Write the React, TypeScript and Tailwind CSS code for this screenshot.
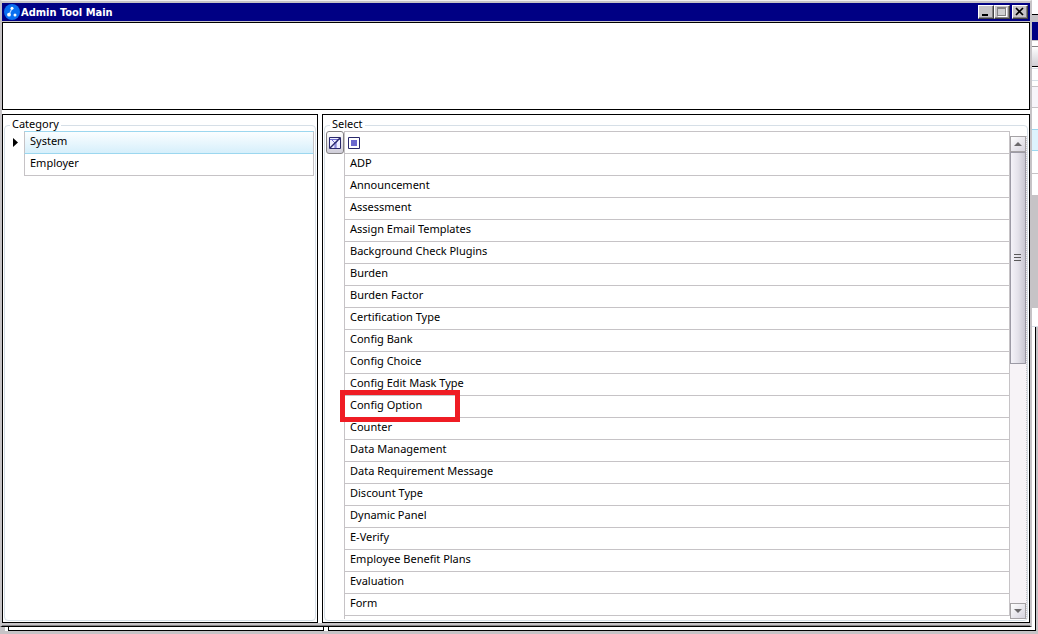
import { ReactNode } from "react";

const categories = ["System", "Employer"];

const options = [
	"ADP",
	"Announcement",
	"Assessment",
	"Assign Email Templates",
	"Background Check Plugins",
	"Burden",
	"Burden Factor",
	"Certification Type",
	"Config Bank",
	"Config Choice",
	"Config Edit Mask Type",
	"Config Option",
	"Counter",
	"Data Management",
	"Data Requirement Message",
	"Discount Type",
	"Dynamic Panel",
	"E-Verify",
	"Employee Benefit Plans",
	"Evaluation",
	"Form",
];

function AppLogo() {
	return (
		<svg width="16" height="16" viewBox="0 0 16 16">
			<circle cx="8" cy="8" r="8" fill="#0a6ff0" />
			<path d="M8 4.500 5 10.700" stroke="#b5d7ff" strokeWidth="1.200" />
			<circle cx="8" cy="4.300" r="1.500" fill="#fff" />
			<circle cx="5" cy="10.700" r="1.900" fill="#fff" />
			<circle cx="11" cy="10.900" r="1.500" fill="#fff" />
		</svg>
	);
}

function CaptionButton({ label, children }: { label: string; children: ReactNode }) {
	return (
		<button
			aria-label={label}
			className="h-[14px] w-4 bg-[#c6c3c6] border border-t-white border-l-white border-r-[#424142] border-b-[#424142] shadow-[inset_-1px_-1px_0_#848284]"
		>
			{children}
		</button>
	);
}

function TitleBar() {
	return (
		<header className="flex h-[18px] items-center bg-[#000084] pl-[2px] pr-[2px]">
			<AppLogo />
			<h1 className="flex-1 pt-px pl-px font-['DejaVu_Sans_Condensed','DejaVu_Sans',sans-serif] text-[11px] leading-4 font-bold text-white">
				Admin Tool Main
			</h1>
			<div className="flex">
				<CaptionButton label="Minimize">
					<svg width="14" height="12" viewBox="0 0 14 12">
						<path d="M3 8h6v2H3z" fill="#000" />
					</svg>
				</CaptionButton>
				<CaptionButton label="Maximize">
					<svg width="14" height="12" viewBox="0 0 14 12" shapeRendering="crispEdges">
						<path d="M3 2h9v9H3z" fill="#fff" />
						<path d="M2 1h9v9H2z" fill="#848284" />
						<path d="M3 3h7v6H3z" fill="#ceced0" />
					</svg>
				</CaptionButton>
				<div className="w-[2px]" />
				<CaptionButton label="Close">
					<svg width="14" height="12" viewBox="0 0 14 12">
						<path d="M3 2l7 7M10 2L3 9" stroke="#000" strokeWidth="1.700" />
					</svg>
				</CaptionButton>
			</div>
		</header>
	);
}

function Group({ title, children }: { title: string; children: ReactNode }) {
	return (
		<fieldset className="flex h-full min-w-0 flex-col rounded-[4px] border border-[#d6dfe7] pb-px">
			<legend className="ml-[5px] h-3 px-[2px] text-[11px] leading-[10px]">{title}</legend>
			{children}
		</fieldset>
	);
}

function CategoryList() {
	return (
		<table className="w-full border-separate border-spacing-0">
			<tbody>
				{categories.map((name, i) => (
					<tr key={name} className={i === 0 ? "h-[23px]" : "h-[22px]"}>
						<td className="w-[19px] p-0 align-middle">
							{i === 0 && (
								<svg width="5" height="9" viewBox="0 0 5 9" className="ml-2">
									<path d="M0 0l5 4.500L0 9z" fill="#000" />
								</svg>
							)}
						</td>
						<td
							className={
								i === 0
									? "border border-[#c6c3c6] border-t-[#9cd7ef] border-b-[#9cd7ef] bg-linear-to-b from-[#fbfeff] to-[#d6effb] p-0 pl-[5px] align-top leading-[17px]"
									: "border border-t-0 border-[#c6c3c6] p-0 pl-[5px] align-top leading-[17px]"
							}
						>
							{name}
						</td>
					</tr>
				))}
			</tbody>
		</table>
	);
}

function OptionGrid() {
	return (
		<table className="w-full border-separate border-spacing-0">
			<thead>
				<tr className="h-[23px]">
					<th className="w-[18px] p-0">
						<button
							aria-label="Clear filter"
							className="flex h-[23px] w-[18px] items-center justify-center rounded-[3px] border border-[#848284] bg-linear-to-b from-white to-[#cfcdd8]"
						>
							<svg width="12" height="12" viewBox="0 0 12 12">
								<path d="M.5.5h11v11H.5z" fill="#eef" stroke="#29286b" />
								<path d="M1 2.500h10M3 3l3 3v5M9 3L7 6v5" fill="none" stroke="#6b69ce" />
								<path d="M11 1 1 11" stroke="#29286b" strokeWidth="1.500" />
							</svg>
						</button>
					</th>
					<th className="border border-[#c6c3c6] p-0 pl-[3px]">
						<svg width="12" height="12" viewBox="0 0 12 12">
							<path d="M.5.5h11v11H.5z" fill="#fff" stroke="#29286b" />
							<path d="M3 3h6v6H3z" fill="#6b69ce" />
						</svg>
					</th>
				</tr>
			</thead>
			<tbody>
				{options.map((name) => (
					<tr key={name} className="h-[22px]">
						<td className="p-0" />
						<td className="relative border border-t-0 border-[#c6c3c6] p-0 pl-[5px] align-top leading-[17px]">
							{name}
							{name === "Config Option" && (
								<span className="absolute -top-[6px] -left-[5px] z-10 h-8 w-[120px] border-[5px] border-[#ef1c24]" />
							)}
						</td>
					</tr>
				))}
				<tr>
					<td />
					<td className="h-[3px] border-l border-[#c6c3c6] p-0" />
				</tr>
			</tbody>
		</table>
	);
}

function ScrollArrow({ up }: { up?: boolean }) {
	return (
		<button
			aria-label={up ? "Scroll up" : "Scroll down"}
			className="flex h-4 w-4 shrink-0 items-center justify-center border border-[#a5a2a5] bg-linear-to-br from-white to-[#d6d3de]"
		>
			<svg width="8" height="4" viewBox="0 0 8 4">
				<path d={up ? "M0 4l4-4 4 4z" : "M0 0l4 4 4-4z"} fill="#6b696b" />
			</svg>
		</button>
	);
}

function ScrollBar() {
	return (
		<div className="flex w-[17px] shrink-0 flex-col border-r border-dotted border-[#c6c3c6] bg-[#f7f3f7]">
			<ScrollArrow up />
			<div className="flex-1">
				<div className="flex h-[47%] w-4 items-center justify-center border border-[#9c9aa5] bg-linear-to-r from-[#f4f2f8] via-[#e4e2ea] to-[#c9c7d2] pr-px">
					<svg width="7" height="8" viewBox="0 0 7 8">
						<path d="M0 .5h7M0 3.500h7M0 6.500h7" stroke="#5a595a" />
					</svg>
				</div>
			</div>
			<ScrollArrow />
		</div>
	);
}

// slice of the window lying behind, visible past the right edge
function BackWindowEdge() {
	return (
		<div className="flex w-[6px] shrink-0 flex-col bg-white">
			<div className="h-[15px] border-b border-black" />
			<div className="h-[7px] bg-[#c6c3c6]" />
			<div className="h-[18px] bg-[#000084]" />
			<div className="h-[6px] border-t border-[#c6c3c6]" />
			<div className="h-[21px] border-t border-b border-t-[#848284] border-b-black bg-linear-to-b from-white to-[#d0ced4]" />
			<div className="mt-px h-[13px] border-y border-[#d6dfe7]" />
			<div className="mt-[5px] h-[22px] border-y border-[#c6c3c6] bg-[#f7f5fa]" />
			<div className="mt-[21px] h-[22px] border-y border-[#9cd7ef] bg-[#def3fd]" />
			<div className="h-[23px] border-b border-[#c6c3c6]" />
			<div className="mt-[21px] h-[113px] bg-[#c6c3c6]" />
			<div className="mt-[18px] flex flex-1 border-t border-[#d6dfe7]">
				<div className="w-[3px]" />
				<div className="w-px bg-black" />
				<div className="w-[2px] bg-[#c6c3c6]" />
			</div>
		</div>
	);
}

function BackWindowBottom() {
	return (
		<div className="flex h-[7px] shrink-0 bg-[#c6c3c6] pb-[3px] pl-[5px]">
			<div className="w-[3px] bg-white" />
			<div className="w-[316px] border border-t-0 border-black bg-white" />
			<div className="w-1 bg-white" />
			<div className="flex-1 border border-t-0 border-black bg-white" />
			<div className="w-[2px]" />
		</div>
	);
}

export default function App() {
	return (
		<div className="flex h-screen flex-col overflow-hidden bg-[#c6c3c6] font-['Noto_Sans','Open_Sans',sans-serif] text-[11px] text-black">
			<div className="flex min-h-0 flex-1">
				<main className="flex min-w-0 flex-1 flex-col border-x-2 border-t border-x-[#c6c3c6] border-t-[#efefef] border-b border-b-black pt-[2px]">
					<TitleBar />
					<div className="mt-px flex min-h-0 flex-1 flex-col gap-1 bg-white">
						<section className="h-[88px] shrink-0 border border-black" />
						<div className="flex min-h-0 flex-1 gap-1">
							<section className="w-[316px] shrink-0 border border-black px-px pt-1 pb-px">
								<Group title="Category">
									<div className="pr-px">
										<CategoryList />
									</div>
								</Group>
							</section>
							<section className="min-w-0 flex-1 border border-black px-px pt-1 pb-px">
								<Group title="Select">
									<div className="flex h-full min-h-0">
										<div className="min-w-0 flex-1 overflow-hidden pl-px">
											<OptionGrid />
										</div>
										<div className="flex pt-[5px]">
											<ScrollBar />
										</div>
									</div>
								</Group>
							</section>
						</div>
					</div>
					<div className="h-[3px] shrink-0 border-b border-[#848284] bg-[#c6c3c6]" />
				</main>
				<BackWindowEdge />
			</div>
			<BackWindowBottom />
		</div>
	);
}
